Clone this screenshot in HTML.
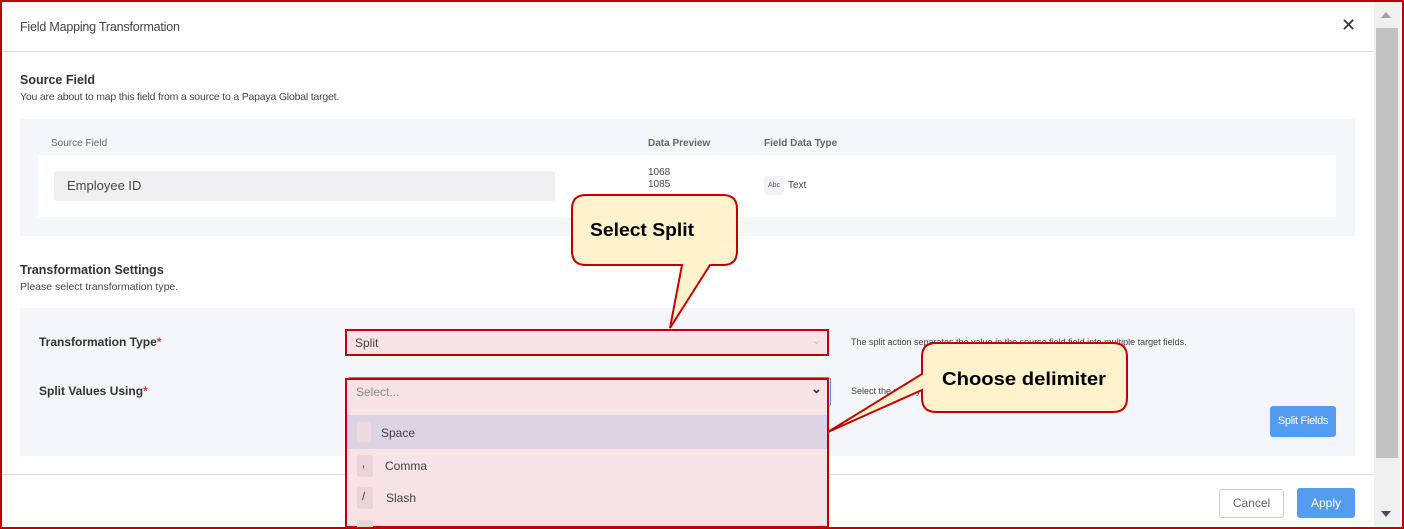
<!DOCTYPE html>
<html><head><style>
*{box-sizing:border-box;margin:0;padding:0}
body{width:1404px;height:529px;overflow:hidden;background:#fff;font-family:"Liberation Sans",sans-serif;color:#333;position:relative}
.a{position:absolute}
</style></head><body>
<div class="a" style="left:0;top:0;width:1404px;height:529px;border:2px solid #c00000;z-index:50;pointer-events:none"></div>
<div class="a" style="left:1374px;top:2px;width:26px;height:525px;background:#f0f0f0"></div>
<div class="a" style="left:1376px;top:28px;width:22px;height:430px;background:#c1c1c1"></div>
<div class="a" style="left:1381px;top:12px;width:0;height:0;border-left:5px solid transparent;border-right:5px solid transparent;border-bottom:6px solid #a0a0a0"></div>
<div class="a" style="left:1381px;top:511px;width:0;height:0;border-left:5px solid transparent;border-right:5px solid transparent;border-top:6px solid #505050"></div>

<div class="a" style="left:20px;top:20px;font-size:12.5px;color:#444;letter-spacing:-0.2px">Field Mapping Transformation</div>
<div class="a" style="left:1341px;top:15px;font-size:18px;color:#333">✕</div>
<div class="a" style="left:2px;top:51px;width:1372px;height:1px;background:#ddd"></div>

<div class="a" style="left:20px;top:73px;font-size:12.5px;font-weight:bold;color:#333">Source Field</div>
<div class="a" style="left:20px;top:91px;font-size:10.5px;color:#444;letter-spacing:-0.2px">You are about to map this field from a source to a Papaya Global target.</div>
<div class="a" style="left:20px;top:119px;width:1335px;height:117px;background:#f5f6fa"></div>
<div class="a" style="left:51px;top:138px;font-size:10px;color:#666">Source Field</div>
<div class="a" style="left:648px;top:138px;font-size:10px;color:#666;font-weight:bold">Data Preview</div>
<div class="a" style="left:764px;top:138px;font-size:10px;color:#666;font-weight:bold">Field Data Type</div>
<div class="a" style="left:38px;top:155px;width:1298px;height:62px;background:#fff"></div>
<div class="a" style="left:54px;top:171px;width:501px;height:30px;background:#f0f0f2;border-radius:3px;padding:7px 13px;font-size:13px;color:#444">Employee ID</div>
<div class="a" style="left:648px;top:167px;font-size:10px;line-height:12px;color:#444">1068<br>1085</div>
<div class="a" style="left:764px;top:176px;width:20px;height:19px;background:#f3f3f6;border-radius:3px;font-size:7px;color:#557;text-align:center;line-height:19px">Abc</div>
<div class="a" style="left:788px;top:180px;font-size:10px;color:#444">Text</div>

<div class="a" style="left:20px;top:263px;font-size:12.5px;font-weight:bold;color:#333">Transformation Settings</div>
<div class="a" style="left:20px;top:281px;font-size:10.5px;color:#444">Please select transformation type.</div>
<div class="a" style="left:20px;top:308px;width:1335px;height:148px;background:#f5f6fa"></div>
<div class="a" style="left:39px;top:335px;font-size:12px;font-weight:bold;color:#333">Transformation Type<span style="color:#d33">*</span></div>
<div class="a" style="left:39px;top:384px;font-size:12px;font-weight:bold;color:#333">Split Values Using<span style="color:#d33">*</span></div>
<div class="a" style="left:345px;top:329px;width:484px;height:27px;background:#f7e3e4;border:2px solid #c00000;padding:5px 8px;font-size:12px;color:#444">Split<span style="position:absolute;right:6px;top:3px;color:#bbb;font-size:11px">⌄</span></div>
<div class="a" style="left:851px;top:337px;font-size:9px;color:#444">The split action separates the value in the source field field into multiple target fields.</div>
<div class="a" style="left:851px;top:386px;font-size:9px;color:#444">Select the rule by which the value will be split into the target fields.</div>
<div class="a" style="left:347px;top:377px;width:484px;height:30px;border:1.5px solid #4a90e2;border-radius:3px"></div>
<div class="a" style="left:345px;top:378px;width:484px;height:150px;background:#f7e3e4;border:2px solid #c00000;z-index:5"></div>
<div class="a" style="left:356px;top:385px;font-size:12px;color:#888;z-index:6">Select...</div>
<div class="a" style="left:811px;top:381px;font-size:13px;color:#333;z-index:6;font-weight:bold">⌄</div>
<div class="a" style="left:347px;top:415px;width:480px;height:34px;background:#dcd3e3;z-index:6"></div>
<div class="a" style="left:357px;top:422px;width:14px;height:20px;background:#ecdade;border-radius:3px;z-index:7"></div>
<div class="a" style="left:381px;top:426px;font-size:12px;color:#444;z-index:7">Space</div>
<div class="a" style="left:357px;top:455px;width:16px;height:22px;background:#ebd3d6;border-radius:3px;z-index:7;font-size:11px;padding:3px 5px">,</div>
<div class="a" style="left:385px;top:459px;font-size:12px;color:#444;z-index:7">Comma</div>
<div class="a" style="left:357px;top:487px;width:16px;height:22px;background:#ebd3d6;border-radius:3px;z-index:7;font-size:11px;padding:4px 5px">/</div>
<div class="a" style="left:386px;top:491px;font-size:12px;color:#444;z-index:7">Slash</div>
<div class="a" style="left:357px;top:520px;width:16px;height:8px;background:#ebd3d6;z-index:7"></div>

<div class="a" style="left:1270px;top:406px;width:66px;height:31px;background:#559bf0;border-radius:3px;color:#fff;font-size:11px;text-align:center;line-height:31px;letter-spacing:-0.3px">Split Fields</div>
<div class="a" style="left:2px;top:474px;width:1372px;height:1px;background:#ddd"></div>
<div class="a" style="left:1219px;top:489px;width:65px;height:29px;border:1px solid #ccc;border-radius:3px;font-size:12px;color:#666;text-align:center;line-height:27px">Cancel</div>
<div class="a" style="left:1297px;top:488px;width:58px;height:30px;background:#559bf0;border-radius:3px;font-size:12px;color:#fff;text-align:center;line-height:30px">Apply</div>

<svg class="a" style="left:0;top:0;z-index:20" width="1404" height="529">
<path d="M586 195 H723 Q737 195 737 209 V251 Q737 265 723 265 H710 L670 328 L682 265 H586 Q572 265 572 251 V209 Q572 195 586 195 Z" fill="#fff2cc" stroke="#c00000" stroke-width="2"/>
<path d="M936 343 H1113 Q1127 343 1127 357 V398 Q1127 412 1113 412 H936 Q922 412 922 398 V390 L828 432 L922 374 V357 Q922 343 936 343 Z" fill="#fff2cc" stroke="#c00000" stroke-width="2"/>
<text x="590" y="236" font-family="Liberation Sans" font-weight="bold" font-size="18" fill="#000" textLength="104" lengthAdjust="spacingAndGlyphs">Select Split</text>
<text x="942" y="385" font-family="Liberation Sans" font-weight="bold" font-size="18" fill="#000" textLength="164" lengthAdjust="spacingAndGlyphs">Choose delimiter</text>
</svg>
</body></html>
